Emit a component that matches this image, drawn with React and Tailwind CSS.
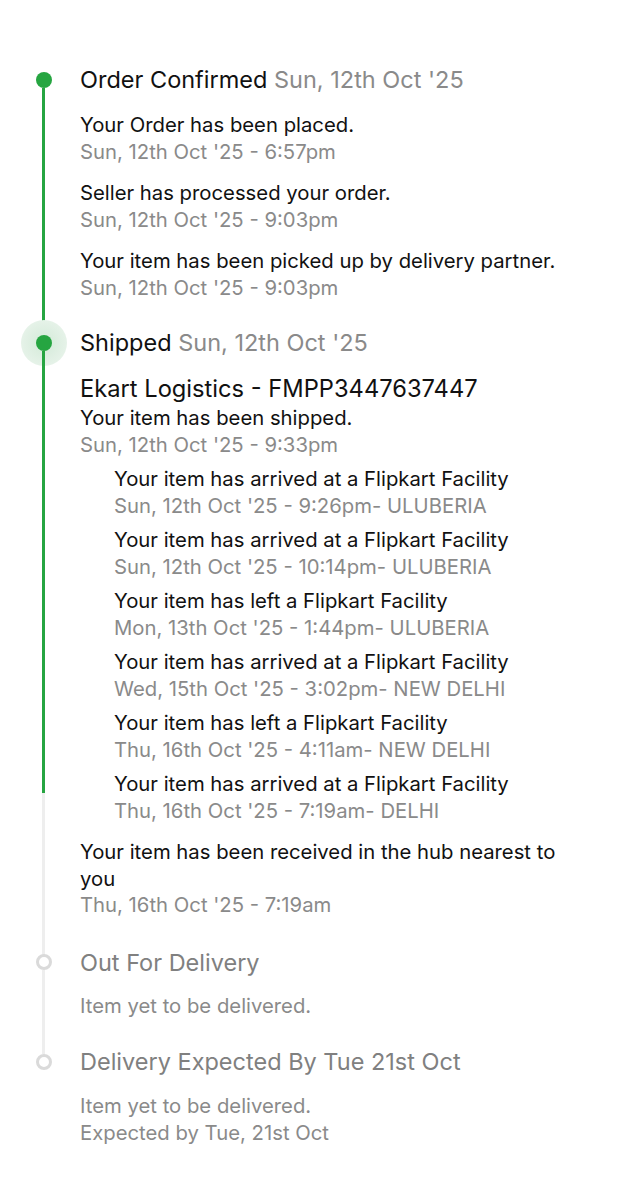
const GREEN = "bg-[#26a541]"

const confirmedEvents = [
  { text: "Your Order has been placed.", date: "Sun, 12th Oct '25 - 6:57pm" },
  { text: "Seller has processed your order.", date: "Sun, 12th Oct '25 - 9:03pm" },
  { text: "Your item has been picked up by delivery partner.", date: "Sun, 12th Oct '25 - 9:03pm" },
]

const hubEvents = [
  { text: "Your item has arrived at a Flipkart Facility", date: "Sun, 12th Oct '25 - 9:26pm- ULUBERIA" },
  { text: "Your item has arrived at a Flipkart Facility", date: "Sun, 12th Oct '25 - 10:14pm- ULUBERIA" },
  { text: "Your item has left a Flipkart Facility", date: "Mon, 13th Oct '25 - 1:44pm- ULUBERIA" },
  { text: "Your item has arrived at a Flipkart Facility", date: "Wed, 15th Oct '25 - 3:02pm- NEW DELHI" },
  { text: "Your item has left a Flipkart Facility", date: "Thu, 16th Oct '25 - 4:11am- NEW DELHI" },
  { text: "Your item has arrived at a Flipkart Facility", date: "Thu, 16th Oct '25 - 7:19am- DELHI" },
]

function Dot({ state }) {
  if (state === "done") {
    return <div className={"w-4 h-4 rounded-full " + GREEN} />
  }
  if (state === "current") {
    return (
      <div className="w-[46px] h-[46px] -my-[15px] rounded-full bg-[radial-gradient(circle,#d3ead8_0%,#e3f1e6_60%,#eef7f0_100%)] flex items-center justify-center">
        <div className={"w-4 h-4 rounded-full " + GREEN} />
      </div>
    )
  }
  return <div className="w-4 h-4 -my-[0.5px] rounded-full border-[3px] border-[#dadada] bg-white" />
}

function Event({ text, date }) {
  return (
    <div className="text-[20.3px] leading-[26.5px]">
      <div className="text-[#111]">{text}</div>
      <div className="text-[#8a8a8a]">{date}</div>
    </div>
  )
}

export default function App() {
  return (
    <div className="bg-white w-[634px] min-h-[1200px] pt-[65px] font-['Inter','Liberation_Sans',sans-serif] antialiased">
      {/* Order Confirmed */}
      <div className="flex">
        <div className="w-[80px] shrink-0 flex flex-col items-center pl-[7px] pt-[7px]">
          <Dot state="done" />
          <div className={"w-[3px] flex-1 " + GREEN} />
        </div>
        <div className="pb-[27px]">
          <div className="text-[23.5px] leading-[30px] text-[#111]">
            Order Confirmed <span className="text-[#8a8a8a]">Sun, 12th Oct '25</span>
          </div>
          <div className="mt-[17px] flex flex-col gap-[15px]">
            {confirmedEvents.map((e, i) => (
              <Event key={i} {...e} />
            ))}
          </div>
        </div>
      </div>

      {/* Shipped */}
      <div className="flex">
        <div className="w-[80px] shrink-0 flex flex-col items-center pl-[7px] pt-[7px]">
          <div className="flex flex-col items-center w-full">
            <div className={"w-[3px] h-[7px] -mt-[7px] " + GREEN} />
            <Dot state="current" />
          </div>
          <div className={"w-[3px] flex-1 " + GREEN} />
          <div className="w-[3px] h-[155px] bg-[#eeeeee]" />
        </div>
        <div className="pb-[29px] max-w-[495px]">
          <div className="text-[23.5px] leading-[30px] text-[#111]">
            Shipped <span className="text-[#8a8a8a]">Sun, 12th Oct '25</span>
          </div>
          <div className="mt-[15px] text-[23.7px] leading-[32px] text-[#111]">Ekart Logistics - FMPP3447637447</div>
          <Event text="Your item has been shipped." date="Sun, 12th Oct '25 - 9:33pm" />
          <div className="mt-[8px] pl-[34px] flex flex-col gap-[8px]">
            {hubEvents.map((e, i) => (
              <Event key={i} {...e} />
            ))}
          </div>
          <div className="mt-[15px]">
            <Event text="Your item has been received in the hub nearest to you" date="Thu, 16th Oct '25 - 7:19am" />
          </div>
        </div>
      </div>

      {/* Out For Delivery */}
      <div className="flex">
        <div className="w-[80px] shrink-0 flex flex-col items-center pl-[7px]">
          <div className="w-[3px] h-[7px] bg-[#eeeeee]" />
          <Dot state="pending" />
          <div className="w-[3px] flex-1 bg-[#eeeeee]" />
        </div>
        <div className="pb-[28px]">
          <div className="text-[23.5px] leading-[30px] text-[#808080]">Out For Delivery</div>
          <div className="mt-[15px] text-[20.3px] leading-[26.5px] text-[#8a8a8a]">Item yet to be delivered.</div>
        </div>
      </div>

      {/* Delivery Expected */}
      <div className="flex">
        <div className="w-[80px] shrink-0 flex flex-col items-center pl-[7px]">
          <div className="w-[3px] h-[7px] bg-[#eeeeee]" />
          <Dot state="pending" />
        </div>
        <div className="pb-[40px]">
          <div className="text-[23.5px] leading-[30px] text-[#808080]">Delivery Expected By Tue 21st Oct</div>
          <div className="mt-[16px] text-[20.3px] leading-[26.5px] text-[#8a8a8a]">
            <div>Item yet to be delivered.</div>
            <div>Expected by Tue, 21st Oct</div>
          </div>
        </div>
      </div>
    </div>
  )
}
